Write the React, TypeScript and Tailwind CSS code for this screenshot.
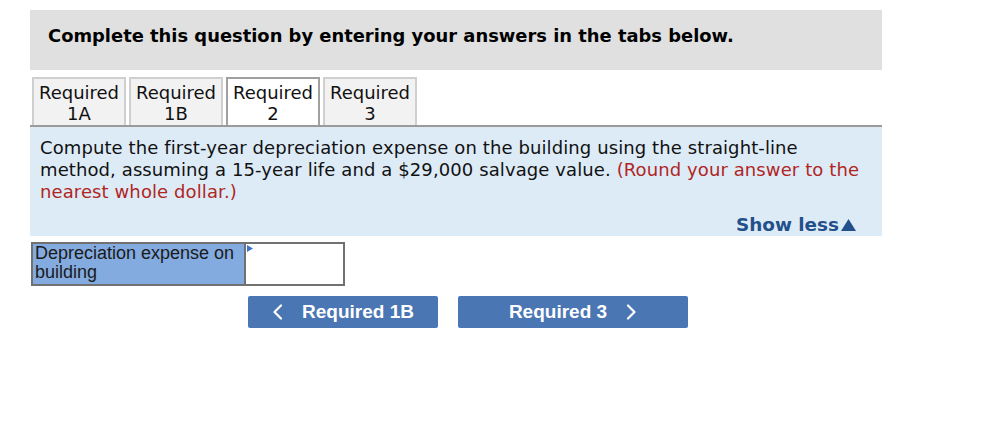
const tabs = [
  { top: 'Required', bottom: '1A' },
  { top: 'Required', bottom: '1B' },
  { top: 'Required', bottom: '2', active: true },
  { top: 'Required', bottom: '3' },
];

function Chevron({ dir }: { dir: 'left' | 'right' }) {
  return (
    <svg width="11" height="16" viewBox="0 0 11 16" fill="none">
      <path
        d={dir === 'left' ? 'M9 1.5 L2.5 8 L9 14.5' : 'M2 1.5 L8.5 8 L2 14.5'}
        stroke="white"
        strokeWidth="2.2"
        strokeLinecap="round"
        strokeLinejoin="round"
      />
    </svg>
  );
}

export default function App() {
  return (
    <div className="w-[1006px] h-[422px] bg-white pt-[10px] pl-[30px]" style={{ fontFamily: 'Verdana, "DejaVu Sans", sans-serif' }}>
      <div className="w-[852px]">
        {/* instructions bar */}
        <div className="h-[60px] bg-[#e0e0e0] pl-[18px] pt-[14px]">
          <p className="text-[17.9px] leading-[24px] font-bold text-black">
            Complete this question by entering your answers in the tabs below.
          </p>
        </div>

        {/* tabs */}
        <div className="mt-[7px] flex gap-[3px] pl-[2px]">
          {tabs.map((t, i) => (
            <div
              key={i}
              className={
                t.active
                  ? 'w-[94px] h-[48px] border-2 border-b-0 border-[#a0a0a0] bg-white text-center text-[18px] leading-[21px] text-[#111] pt-[3px]'
                  : 'w-[94px] h-[48px] border-2 border-b-0 border-[#cfcfcf] bg-[#f2f2f2] text-center text-[18px] leading-[21px] text-[#111] pt-[3px]'
              }
            >
              <div>{t.top}</div>
              <div>{t.bottom}</div>
            </div>
          ))}
        </div>
        <div className="h-[2px] bg-[#9b9b9b]" />

        {/* question */}
        <div className="h-[109px] bg-[#ddebf7] pl-[10px] pr-[20px] pt-[10px] relative">
          <p className="text-[18px] leading-[22px] tracking-[0.1px] text-[#111]">
            Compute the first-year depreciation expense on the building using the straight-line method, assuming a
            15-year life and a $29,000 salvage value.{' '}
            <span className="text-[#b0261f]">(Round your answer to the nearest whole dollar.)</span>
          </p>
          <div className="absolute right-[26px] bottom-[1px] flex items-center text-[18.4px] leading-[20px] font-bold text-[#23508b]">
            Show less
            <svg className="ml-[2px]" width="15" height="12" viewBox="0 0 15 12">
              <path d="M7.5 0 L15 12 L0 12 Z" fill="#23508b" />
            </svg>
          </div>
        </div>

        {/* answer row */}
        <div className="mt-[6px] ml-[1px] flex">
          <div
            className="w-[215px] h-[44px] border-2 border-[#717171] bg-[#84abe0] px-[2px] text-[18px] leading-[19px] text-[#1a1a1a]"
            style={{ fontFamily: '"Liberation Sans", Arial, sans-serif' }}
          >
            Depreciation expense on building
          </div>
          <div className="relative w-[99px] h-[44px] border-2 border-l-0 border-[#717171] bg-white">
            <svg className="absolute left-[1px] top-[1px]" width="6" height="7" viewBox="0 0 6 7">
              <path d="M0 0 L6 3.5 L0 7 Z" fill="#3d74c9" />
            </svg>
          </div>
        </div>

        {/* nav buttons */}
        <div className="mt-[10px] flex gap-[20px] pl-[218px]" style={{ fontFamily: '"Liberation Sans", Arial, sans-serif' }}>
          <button className="w-[190px] h-[32px] rounded-[2px] bg-[#4a76b3] text-white text-[19px] font-bold flex items-center justify-center gap-[19px]">
            <Chevron dir="left" />
            Required 1B
          </button>
          <button className="w-[230px] h-[32px] rounded-[2px] bg-[#4a76b3] text-white text-[19px] font-bold flex items-center justify-center gap-[19px]">
            Required 3
            <Chevron dir="right" />
          </button>
        </div>
      </div>
    </div>
  );
}
